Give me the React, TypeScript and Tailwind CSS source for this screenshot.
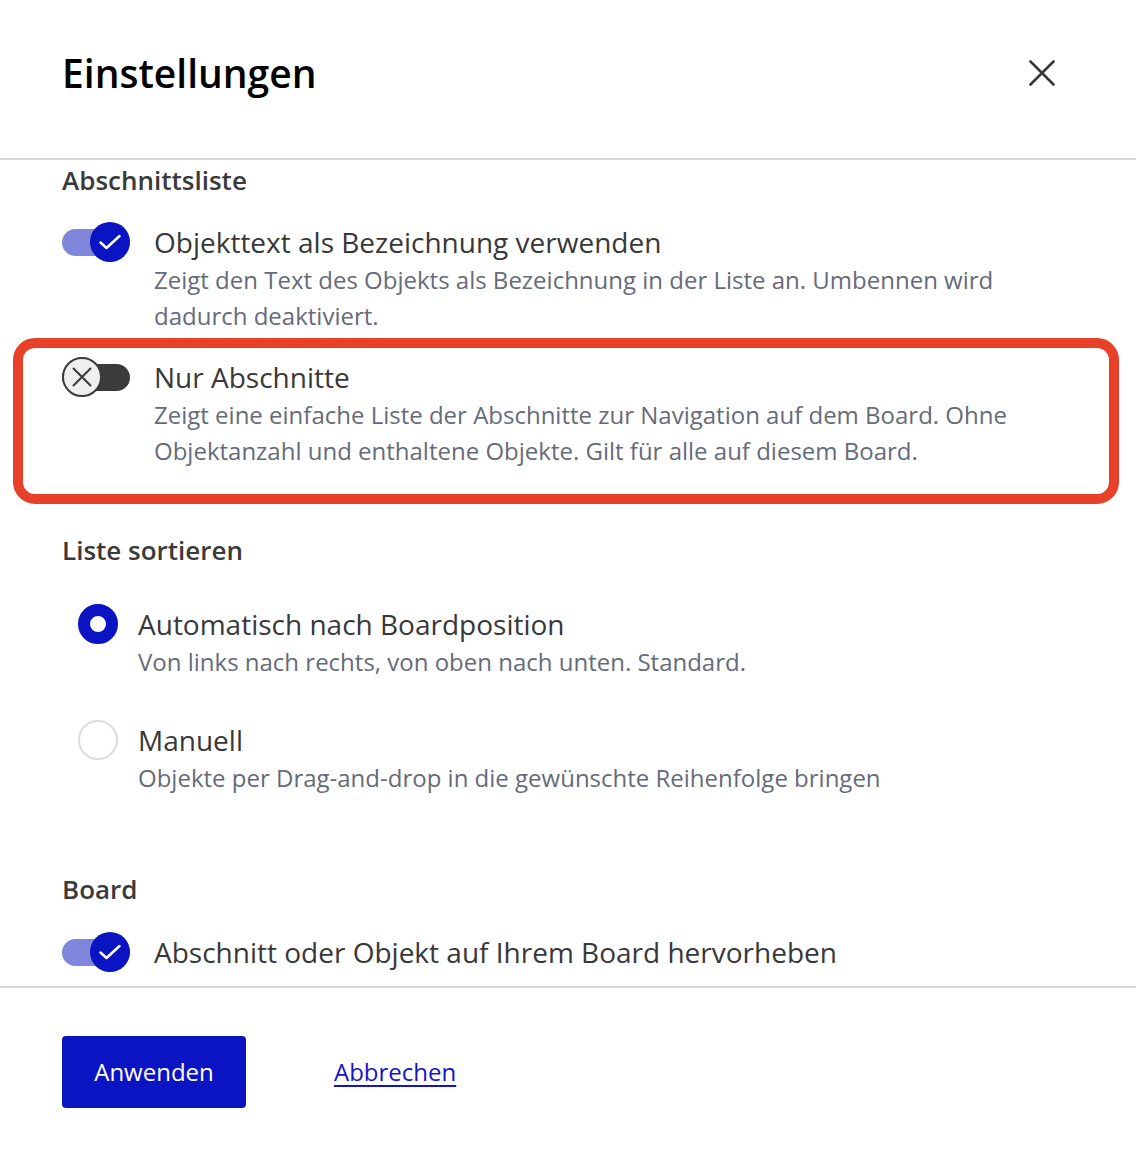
import React, { useState } from "react";

const FONT = { fontFamily: '"Open Sans", "Noto Sans", sans-serif' };

type ToggleProps = { on: boolean; onChange: () => void };

const Toggle: React.FC<ToggleProps> = ({ on, onChange }) => (
  <button
    type="button"
    onClick={onChange}
    className="relative flex h-10 w-[68px] shrink-0 items-center"
  >
    <span
      className={`h-[27px] w-full rounded-full ${
        on ? "bg-[#7f86dc]" : "bg-[#3b3b3b]"
      }`}
    />
    {on ? (
      <span className="absolute right-0 top-0 flex h-10 w-10 items-center justify-center rounded-full bg-[#0b14c2]">
        <svg width="24" height="24" viewBox="0 0 24 24" fill="none">
          <path
            d="M2.5 12.5l6 5.5L21.5 6"
            stroke="white"
            strokeWidth="2.5"
            strokeLinecap="round"
            strokeLinejoin="round"
          />
        </svg>
      </span>
    ) : (
      <span className="absolute left-0 top-0 flex h-10 w-10 items-center justify-center rounded-full border-2 border-[#3b3b3b] bg-[#efefef]">
        <svg width="20" height="20" viewBox="0 0 20 20" fill="none">
          <path
            d="M1.5 1.5l17 17M18.5 1.5l-17 17"
            stroke="#3b3b3b"
            strokeWidth="2"
            strokeLinecap="round"
          />
        </svg>
      </span>
    )}
  </button>
);

type RadioProps = { checked: boolean; onSelect: () => void };

const Radio: React.FC<RadioProps> = ({ checked, onSelect }) => (
  <button
    type="button"
    onClick={onSelect}
    className={`h-10 w-10 shrink-0 rounded-full ${
      checked ? "border-[12px] border-[#0b14c2]" : "border-2 border-[#dcdcdc]"
    }`}
  />
);

const App: React.FC = () => {
  const [useObjectText, setUseObjectText] = useState(true);
  const [sectionsOnly, setSectionsOnly] = useState(false);
  const [sortMode, setSortMode] = useState<"auto" | "manual">("auto");
  const [highlight, setHighlight] = useState(true);

  return (
    <div className="flex h-[1152px] w-full flex-col bg-white" style={FONT}>
      {/* Header */}
      <header className="flex h-[160px] shrink-0 items-start justify-between border-b-2 border-[#dcdcdc] px-[62px] pt-[47px]">
        <h1 className="text-[39px] font-semibold leading-[52px] text-black">
          Einstellungen
        </h1>
        <button
          type="button"
          className="mr-[12px] mt-[6px] flex h-10 w-10 items-center justify-center"
        >
          <svg width="26" height="26" viewBox="0 0 26 26" fill="none">
            <path
              d="M1.5 1.5l23 23M24.5 1.5l-23 23"
              stroke="#383838"
              strokeWidth="2.6"
              strokeLinecap="round"
            />
          </svg>
        </button>
      </header>

      {/* Body */}
      <main className="h-[826px] shrink-0 overflow-hidden px-[62px] pt-[4px]">
        <h2 className="text-[26px] font-semibold leading-8 text-[#3a3a3a]">
          Abschnittsliste
        </h2>

        <div className="mt-[26px] flex gap-6">
          <Toggle on={useObjectText} onChange={() => setUseObjectText(!useObjectText)} />
          <div>
            <div className="text-[28px] leading-10 text-[#383838]">
              Objekttext als Bezeichnung verwenden
            </div>
            <p className="text-2xl leading-9 text-[#666b78]">
              Zeigt den Text des Objekts als Bezeichnung in der Liste an. Umbennen wird
              dadurch deaktiviert.
            </p>
          </div>
        </div>

        <div className="relative mt-[23px] flex gap-6">
          <Toggle on={sectionsOnly} onChange={() => setSectionsOnly(!sectionsOnly)} />
          <div>
            <div className="text-[28px] leading-10 text-[#383838]">Nur Abschnitte</div>
            <p className="text-2xl leading-9 text-[#666b78]">
              Zeigt eine einfache Liste der Abschnitte zur Navigation auf dem Board. Ohne
              Objektanzahl und enthaltene Objekte. Gilt für alle auf diesem Board.
            </p>
          </div>
          <div className="pointer-events-none absolute -bottom-[35px] -left-[49px] -right-[45px] -top-[19px] rounded-[22px] border-[10px] border-[#e8412a]" />
        </div>

        <h2 className="mt-[65px] text-[26px] font-semibold leading-8 text-[#3a3a3a]">
          Liste sortieren
        </h2>

        <div className="mt-[38px] flex gap-5 pl-4">
          <Radio checked={sortMode === "auto"} onSelect={() => setSortMode("auto")} />
          <div>
            <div className="text-[28px] leading-10 text-[#383838]">
              Automatisch nach Boardposition
            </div>
            <p className="text-2xl leading-9 text-[#666b78]">
              Von links nach rechts, von oben nach unten. Standard.
            </p>
          </div>
        </div>

        <div className="mt-[40px] flex gap-5 pl-4">
          <Radio checked={sortMode === "manual"} onSelect={() => setSortMode("manual")} />
          <div>
            <div className="text-[28px] leading-10 text-[#383838]">Manuell</div>
            <p className="text-2xl leading-9 text-[#666b78]">
              Objekte per Drag-and-drop in die gewünschte Reihenfolge bringen
            </p>
          </div>
        </div>

        <h2 className="mt-[77px] text-[26px] font-semibold leading-8 text-[#3a3a3a]">
          Board
        </h2>

        <div className="mt-[27px] flex gap-6">
          <Toggle on={highlight} onChange={() => setHighlight(!highlight)} />
          <div className="text-[28px] leading-10 text-[#383838]">
            Abschnitt oder Objekt auf Ihrem Board hervorheben
          </div>
        </div>
      </main>

      {/* Footer */}
      <footer className="flex items-center gap-[88px] border-t-2 border-[#dcdcdc] px-[62px] pt-[48px]">
        <button
          type="button"
          className="h-[72px] w-[184px] rounded-[4px] bg-[#0b14c2] text-2xl text-white"
        >
          Anwenden
        </button>
        <a href="#" className="text-2xl text-[#1414c8] underline underline-offset-4">
          Abbrechen
        </a>
      </footer>
    </div>
  );
};

export default App;
